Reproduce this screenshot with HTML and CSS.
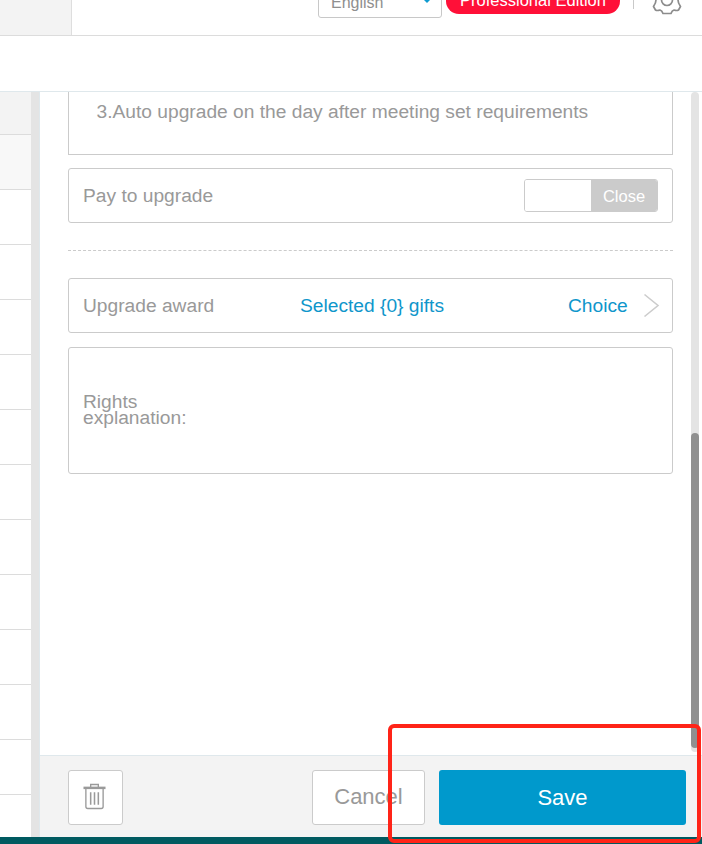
FILE: index.html
```html
<!DOCTYPE html>
<html lang="en">
<head>
<meta charset="utf-8">
<title>Member level</title>
<link rel="stylesheet" href="styles.css">
</head>
<body>
<div class="page">
  <header class="topbar">
    <div class="topbar-left"></div>
    <div class="topbar-right">
      <div class="lang"><span>English</span><i class="lang-caret"></i></div>
      <div class="edition">Professional Edition</div>
      <div class="divider"></div>
      <svg class="gear" width="30" height="30" viewBox="0 0 30 30" fill="none" stroke="#8c8c8c" stroke-width="1.7" stroke-linejoin="round"><path d="M11 28.500H19Q20 25.500 22 25 25 26 26.500 25L28.500 21.500Q26 18 26 15 26 12 28.500 8.500L26.500 5Q25 4 22 5 20 4.500 19 1.500H11Q10 4.500 8 5 5 4 3.500 5L1.500 8.500Q4 12 4 15 4 18 1.500 21.500L3.500 25Q5 26 8 25 10 25.500 11 28.500Z"/><circle cx="15" cy="15" r="5.500"/></svg>
    </div>
  </header>
  <div class="subbar"></div>
  <main class="main">
    <div class="table">
      <div class="cell cell-a"></div>
      <div class="cell cell-b"></div>
      <div class="cell"></div><div class="cell"></div><div class="cell"></div><div class="cell"></div>
      <div class="cell"></div><div class="cell"></div><div class="cell"></div><div class="cell"></div>
      <div class="cell"></div><div class="cell"></div><div class="cell"></div><div class="cell"></div>
    </div>
    <div class="gutter"></div>
    <section class="panel">
      <div class="panel-body">
        <div class="form">
          <div class="box box-note">3.Auto upgrade on the day after meeting set requirements</div>
          <div class="box row row-pay">
            <span>Pay to upgrade</span>
            <div class="switch"><span class="switch-off"></span><span class="switch-label">Close</span></div>
          </div>
          <div class="dash"></div>
          <div class="box row row-award">
            <span class="award-label">Upgrade award</span>
            <span class="link award-count">Selected {0} gifts</span>
            <span class="link award-choice">Choice</span>
            <svg class="chev" width="17" height="25" viewBox="0 0 17 25" fill="none" stroke="#cccccc" stroke-width="1.6"><path d="M1.500 1.500 15 12.500 1.500 23.500"/></svg>
          </div>
          <div class="box rights"><span class="rights-label">Rights explanation:</span></div>
        </div>
        <div class="scrollbar"><div class="thumb"></div></div>
      </div>
      <footer class="panel-foot">
        <button class="btn btn-trash" aria-label="Delete">
          <svg width="23" height="27" viewBox="0 0 24 28" fill="none" stroke="#9a9a9a"><path d="M8 4V1.500h8V4" stroke-width="1.400"/><path d="M0.500 5h23" stroke-width="2.600"/><path d="M3 6v18.500a2 2 0 0 0 2 2h14a2 2 0 0 0 2-2V6" stroke-width="1.400"/><path d="M8 9.500v13M12 9.500v13M16 9.500v13" stroke-width="1.600"/></svg>
        </button>
        <button class="btn btn-cancel">Cancel</button>
        <button class="btn btn-save">Save</button>
      </footer>
    </section>
  </main>
  <div class="bottom"></div>
  <div class="annotation"></div>
</div>
</body>
</html>
```
FILE: styles.css
```css
* { box-sizing: border-box; }
html, body { margin: 0; padding: 0; }
body { font-family: "Liberation Sans", Arial, sans-serif; background: #fff; color: #999; }
.page { position: relative; width: 702px; height: 844px; overflow: hidden; display: flex; flex-direction: column; }

.topbar { height: 36px; flex: none; display: flex; justify-content: space-between; border-bottom: 1px solid #dcdcdc; overflow: hidden; }
.topbar-left { width: 72px; height: 35px; background: #f3f3f3; border-right: 1px solid #dedede; }
.topbar-right { display: flex; align-items: flex-start; padding-right: 20px; }
.lang { width: 124px; height: 28px; margin-top: -10px; border: 1px solid #c8c8c8; border-radius: 3px; padding: 3px 0 0 12px; font-size: 16px; line-height: 18px; color: #8f8f8f; position: relative; }
.lang-caret { position: absolute; right: 10px; top: 8px; width: 0; height: 0; border-left: 4px solid transparent; border-right: 4px solid transparent; border-top: 4px solid #0f9bd0; }
.edition { width: 174px; height: 26px; margin: -12px 0 0 4px; background: #ff1038; color: #fff; border-radius: 0 0 13px 13px; font-size: 16.5px; line-height: 24px; text-align: center; }
.divider { width: 1px; height: 9px; margin-left: 13px; background: #c9c9c9; }
.gear { margin: -15px 0 0 18px; }

.subbar { height: 56px; flex: none; background: #fff; border-bottom: 1px solid #dfe8ec; }
.main { flex: 1; min-height: 0; display: flex; }
.table { width: 31px; flex: none; display: flex; flex-direction: column; overflow: hidden; }
.cell { height: 55px; flex: none; border-bottom: 1px solid #dcdcdc; }
.cell-a { height: 43px; background: #f3f3f3; }
.cell-b { background: #f8f8f8; }
.gutter { width: 9px; flex: none; background: #e4e4e4; border-right: 1px solid #dfe8ec; }

.panel { flex: 1; min-width: 0; display: flex; flex-direction: column; }
.panel-body { flex: 1; min-height: 0; display: flex; position: relative; }
.form { width: 605px; margin-left: 28px; font-size: 19.2px; line-height: 22px; color: #999; }
.box { border: 1px solid #cbcbcb; border-radius: 3px; }
.box-note { height: 63px; border-top: 0; border-radius: 0; padding: 9px 0 0 27.500px; }
.row { height: 55px; display: flex; align-items: center; padding-left: 14px; }
.row-pay { margin-top: 13px; justify-content: space-between; padding-right: 14px; }
.switch { width: 134px; height: 33px; display: flex; border: 1px solid #cbcbcb; border-radius: 3px; overflow: hidden; }
.switch-off { width: 66px; flex: none; background: #fff; }
.switch-label { flex: 1; background: #cbcbcb; color: #fff; font-size: 16.5px; line-height: 33px; text-align: center; }
.dash { height: 1px; margin: 27px 0; border-top: 1px dashed #cbcbcb; }
.award-label { width: 217px; }
.link { color: #0f96cb; }
.award-count { width: 268px; }
.award-choice { width: 75px; }
.chev { flex: none; }
.rights { height: 127px; margin-top: 14px; padding: 0 0 2px 14px; display: flex; align-items: center; }
.rights-label { width: 120px; line-height: 16px; }

.scrollbar { position: absolute; left: 651px; top: 0; bottom: 3px; width: 8px; background: #e4e4e4; border-radius: 4px; }
.thumb { position: absolute; left: 0; right: 0; top: 341px; bottom: 4px; background: #909090; border-radius: 4px; }

.panel-foot { height: 82px; flex: none; background: #f3f3f3; border-top: 1px solid #dfe8ec; padding: 14px 16px 0 28px; display: flex; align-items: flex-start; }
.btn { height: 55px; border-radius: 3px; font-family: inherit; font-size: 22px; padding: 0; display: flex; align-items: center; justify-content: center; }
.btn-trash { width: 55px; background: #fff; border: 1px solid #cbcbcb; padding: 0 3px 3px 0; }
.btn-cancel { width: 113px; margin-left: auto; background: #fff; border: 1px solid #cbcbcb; color: #999; padding-bottom: 2px; }
.btn-save { width: 247px; margin-left: 14px; background: #0099cc; border: 0; color: #fff; }

.bottom { height: 7px; flex: none; background: #005a60; }
.annotation { position: absolute; left: 388px; top: 724px; width: 313px; height: 119px; border: 4px solid #ff2418; border-radius: 6px; }
```
